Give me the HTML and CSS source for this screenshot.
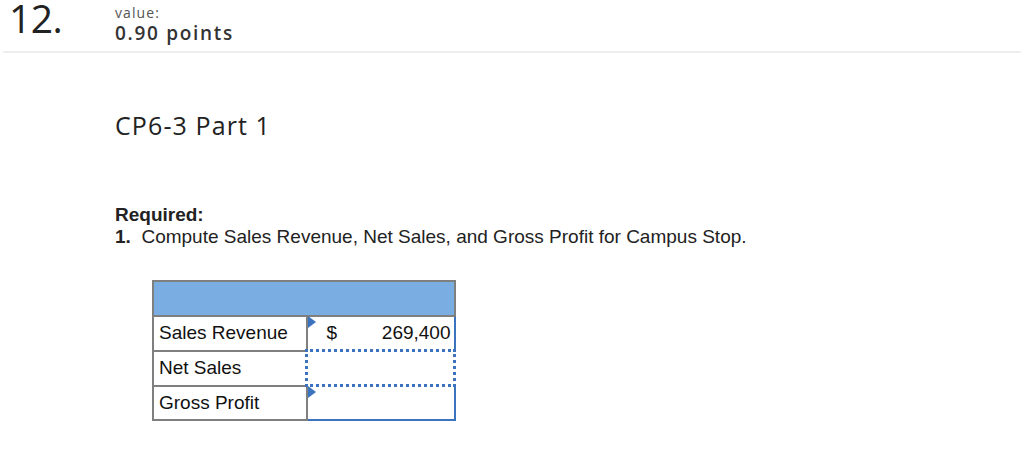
FILE: index.html
```html
<!DOCTYPE html>
<html>
<head>
<meta charset="utf-8">
<link rel="stylesheet" href="styles.css">
</head>
<body>
<header class="qhead">
  <div class="qnum">12.</div>
  <div class="qval">
    <div class="vlabel">value:</div>
    <div class="vpoints">0.90 points</div>
  </div>
</header>
<div class="divider"></div>
<main class="content">
  <h2 class="title">CP6-3 Part 1</h2>
  <div class="req">
    <div class="req-h">Required:</div>
    <div class="req-1"><b>1.</b>&nbsp; Compute Sales Revenue, Net Sales, and Gross Profit for Campus Stop.</div>
  </div>
  <table class="sheet">
    <tr class="hrow"><td colspan="2"></td></tr>
    <tr>
      <td class="lbl">Sales Revenue</td>
      <td class="inp"><span class="tri"></span><span class="cur">$</span><span class="amt">269,400</span></td>
    </tr>
    <tr>
      <td class="lbl">Net Sales</td>
      <td class="inp focus"></td>
    </tr>
    <tr>
      <td class="lbl">Gross Profit</td>
      <td class="inp"><span class="tri"></span></td>
    </tr>
  </table>
</main>
</body>
</html>
```
FILE: styles.css
```css
html, body { margin: 0; padding: 0; background: #fff; }
body { font-family: "Open Sans", "Liberation Sans", sans-serif; color: #333; }
.qhead { display: flex; align-items: flex-start; height: 51px; }
.qnum { font-family: "Open Sans", sans-serif; font-weight: 400; font-size: 39px; line-height: 36px; color: #222; margin-left: 9px; margin-top: 0; width: 106px; letter-spacing: -0.5px; }
.qval { padding-top: 5px; }
.vlabel { font-size: 14px; line-height: 16px; color: #555; letter-spacing: 1.1px; }
.vpoints { font-size: 19px; font-weight: 600; line-height: 24px; color: #333; letter-spacing: 1.7px; }
.divider { height: 2px; background: #eeeeee; margin: 0 3px; }
.content { padding-left: 115px; }
.title { margin: 57px 0 0 0; font-size: 25px; font-weight: 400; line-height: 30px; color: #222; letter-spacing: 1.1px; }
.req { margin-top: 64px; font-family: "Liberation Sans", Arial, sans-serif; font-size: 19px; line-height: 22px; color: #222; }
.req-h { font-weight: 700; }
.sheet { margin-top: 32px; margin-left: 37px; border-collapse: collapse; font-family: "Liberation Sans", Arial, sans-serif; font-size: 19px; color: #111; }
.sheet td { padding: 0; }
.hrow td { height: 33px; background: #7aade2; border: 2px solid #7f7f7f; }
.lbl { width: 146px; height: 32px; border: 2px solid #7f7f7f; padding-left: 5px !important; vertical-align: middle; }
.inp { width: 145px; height: 32px; border: 2px solid #3b73bf; position: relative; vertical-align: middle; }
.inp.focus { border: 3px dotted #3b73bf; }
.tri { position: absolute; left: 0; top: -1px; width: 0; height: 0; border-top: 6px solid transparent; border-bottom: 6px solid transparent; border-left: 8px solid #3b73bf; }
.cur { position: absolute; left: 19px; top: 5px; }
.amt { position: absolute; right: 3px; top: 5px; }
```
